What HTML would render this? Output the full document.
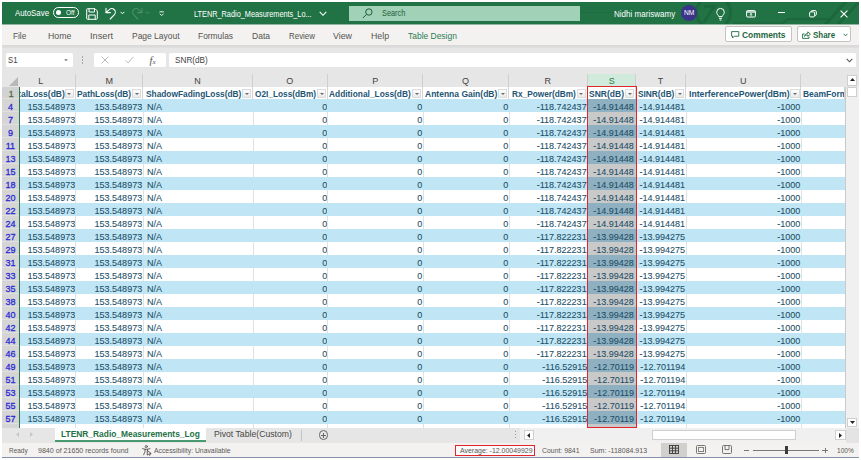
<!DOCTYPE html>
<html lang="en"><head><meta charset="utf-8"><title>LTENR_Radio_Measurements_Log - Excel</title>
<style>
*{box-sizing:border-box;margin:0;padding:0}
html,body{width:861px;height:460px;overflow:hidden;background:#fff}
body{font-family:"Liberation Sans",sans-serif;color:#444;position:relative}
#app{position:absolute;left:0;top:0;width:861px;height:460px}
#app div,#app span,#app i,#app svg{position:absolute}
.t{white-space:nowrap;line-height:1;transform-origin:left center}
/* title bar */
#title{left:2px;top:2px;width:857px;height:22px;background:#217346}
#search{left:348.8px;top:5.8px;width:231.2px;height:15px;background:#a1d1b6}
#avatar{left:681.2px;top:5.3px;width:15.6px;height:15.6px;border-radius:50%;background:#3b3488}
/* ribbon tabs */
#ribbon{left:2px;top:24px;width:857px;height:21px;background:#f3f2f1}
#shadow{left:2px;top:45px;width:857px;height:5px;background:linear-gradient(#d7d7d7,#e6e6e6)}
#tstrip{left:2px;top:24px;width:857px;height:1px;background:#8fb5a0}
.btn{background:#fff;border:1px solid #c6c4c2;border-radius:2px}
/* formula bar */
#fbar{left:2px;top:48px;width:857px;height:24px;background:#e6e6e6}
.wb{background:#fff;border-radius:1.5px}
/* grid */
#grid{left:0;top:0;width:861px;height:460px}
.colhdr{left:2px;top:72px;width:857px;height:14.5px;background:#e6e6e6}
.ch{top:74px;height:12.5px;border-right:1px solid #cfcfcf;}
.ch span{left:0;right:0;top:2.2px;text-align:center;font-size:9.8px;line-height:1;color:#444;transform:scaleX(.92)}
.ch.sel{background:#d0ebdb;border-bottom:1.5px solid #217346}
.ch.sel span{color:#2c7d50}
.rh{left:2px;top:0;width:17px;height:13px;background:#d5d5d5;border-bottom:1px solid #e0e0e0}
.rh span{left:0;right:0.2px;top:3px;text-align:center;font-size:9.7px;line-height:1;color:#2b2bd6;transform:scaleX(.93);-webkit-text-stroke:0.3px #2b2bd6}
.row .rh{left:0}
.rh.r1{background:#d2d2d2}
.rh.r1 span{color:#4f6b3a;right:-1.5px;top:2.4px;font-size:9.4px;-webkit-text-stroke:0.3px #4f6b3a}
.hc{top:86.5px;height:12.5px;background:#fff;border-right:1px solid #d4d4d4;overflow:hidden}
.hx{left:2px;top:2.1px;font-size:9.6px;font-weight:bold;line-height:1;color:#1d5573;white-space:nowrap;transform:scaleX(.885);transform-origin:left center}
.dd{right:0.6px;top:2px;width:9.4px;height:9.8px;background:linear-gradient(#fdfdfd,#e9e9e9);border:1px solid #dcdcdc}
.dd:after{content:"";position:absolute;left:1.9px;top:3.2px;border:2.1px solid transparent;border-top:2.5px solid #6a6a6a;border-bottom:0}
.row{left:2px;width:843.5px;height:13px}
.row.b{background:#c0e6f5}
.row.w{background:#fff}
.c{top:0;height:13px;overflow:hidden;border-right:1px solid transparent}
.row.w .c{border-right-color:#e1e1e1}
.c span{top:2.9px;font-size:9.5px;line-height:1;color:#214e68;white-space:nowrap;-webkit-text-stroke:0.08px #214e68}
.c.r span{right:0.3px;transform:scaleX(.95);transform-origin:right center}
.c.l span{left:3.2px;transform:scaleX(.95);transform-origin:left center}
.c.r.s span{right:1.9px}
.row.b .c.s{background:#8eb0c0}
.row.w .c.s{background:#c9c9c9}
.gline{left:19px;top:86.5px;width:1.1px;height:341.5px;background:#27794b}
.redbox{border:1.8px solid #e3242b}
/* vertical scrollbar */
#vs{left:845px;top:86.5px;width:14px;height:341.5px;background:#f0f0f0;border-left:1px solid #c9c9c9}
#corner{left:846px;top:428px;width:13px;height:15px;background:#e4e4e4}
/* sheet tab bar */
#tabs{left:2px;top:428px;width:857px;height:15px;background:#e6e6e6}
#hs{left:519.5px;top:428px;width:339.5px;height:15px;background:#f0f0f0}
#status{left:2px;top:443px;width:857px;height:14.8px;background:#f3f2f1;border-bottom:1px solid #8391aa}


</style></head>
<body>
<div id="app">
<div id="title"></div>
<svg id="deco" style="left:2px;top:2px" width="857" height="22" viewBox="2 2 857 22" fill="none" stroke="#1c673c" stroke-width="3">
  <circle cx="713.5" cy="12.5" r="17"/><path d="M704 6.5 H714 L703.5 23" stroke-width="2.6"/>
  <path d="M580 12.5 H640" stroke-width="1.2" opacity=".5"/>
  <path d="M733 23.2 H782" stroke-width="1.6" opacity=".7"/><path d="M780 25.5 L788 19.2 H829" stroke-width="2.2"/><path d="M823.6 26.4 L847.4 0.1"/><path d="M836.2 26.4 L860.6 0.1"/>
</svg>
<!-- autosave toggle -->
<div style="left:52.8px;top:7.4px;width:25.8px;height:10.6px;border:1px solid #fff;border-radius:5.3px"></div>
<div style="left:55.9px;top:10.2px;width:5px;height:5px;border-radius:50%;background:#fff"></div>
<!-- save -->
<svg style="left:86px;top:8px" width="12" height="12" viewBox="0 0 12 12" fill="none" stroke="#fff" stroke-width="1">
  <path d="M0.7 1.5 Q0.7 0.7 1.5 0.7 H9 L11.3 3 V10.5 Q11.3 11.3 10.5 11.3 H1.5 Q0.7 11.3 0.7 10.5 Z"/>
  <path d="M3 0.7 V4 H8.5 V0.7"/><path d="M2.8 11.3 V7 H9.2 V11.3"/>
</svg>
<!-- undo -->
<svg style="left:105px;top:7px" width="12" height="13" viewBox="0 0 12 13" fill="none" stroke="#fff" stroke-width="1.1" stroke-linecap="round" stroke-linejoin="round">
  <path d="M1 1.2 V5.6 H5.4"/><path d="M1.2 5.4 L4 2.8 A3.6 3.6 0 0 1 9.4 7.6 L5.2 12"/>
</svg>
<svg style="left:119.5px;top:11.4px" width="5" height="4" viewBox="0 0 5 4" fill="none" stroke="#fff" stroke-width="1"><path d="M0.6 0.8 L2.5 2.8 L4.4 0.8"/></svg>
<!-- redo dim -->
<svg style="left:130.5px;top:7px" width="12" height="13" viewBox="0 0 12 13" fill="none" stroke="#4d9069" stroke-width="1.1" stroke-linecap="round" stroke-linejoin="round">
  <path d="M11 1.2 V5.6 H6.6"/><path d="M10.8 5.4 L8 2.8 A3.6 3.6 0 0 0 2.6 7.6 L6.8 12"/>
</svg>
<svg style="left:144.7px;top:11.4px" width="5" height="4" viewBox="0 0 5 4" fill="none" stroke="#4d9069" stroke-width="1"><path d="M0.6 0.8 L2.5 2.8 L4.4 0.8"/></svg>
<!-- qat -->
<svg style="left:159.2px;top:10.8px" width="5.4" height="5.6" viewBox="0 0 5.4 5.6" fill="none" stroke="#fff" stroke-width="0.9"><path d="M0.5 0.8 H4.9"/><path d="M0.8 2.7 L2.7 4.6 L4.6 2.7"/></svg>
<!-- filename chevron -->
<svg style="left:319.3px;top:10.8px" width="8" height="6" viewBox="0 0 8 6" fill="none" stroke="#fff" stroke-width="1.1"><path d="M0.7 0.9 L4 4.3 L7.3 0.9"/></svg>
<!-- search -->
<div id="search"></div>
<svg style="left:361.5px;top:7.5px" width="11" height="11" viewBox="0 0 11 11" fill="none" stroke="#1f5e3c" stroke-width="1"><circle cx="6.9" cy="4" r="3.2"/><path d="M4.6 6.3 L0.8 10.1"/></svg>
<div id="avatar"></div>
<!-- lightbulb -->
<svg style="left:716px;top:7.5px" width="9" height="13" viewBox="0 0 9 13" fill="none" stroke="#fff" stroke-width="1"><path d="M2.8 8.6 C2.6 7.2 0.7 6.4 0.7 4.2 A3.8 3.8 0 0 1 8.3 4.2 C8.3 6.4 6.4 7.2 6.2 8.6 Z"/><path d="M3 10.3 H6"/><path d="M3.6 12 H5.4"/></svg>
<!-- ribbon display -->
<svg style="left:745.6px;top:9.6px" width="10" height="8" viewBox="0 0 10 8" fill="none" stroke="#fff" stroke-width="1"><rect x="0.6" y="0.6" width="8.8" height="6.4" rx="0.8"/><path d="M0.6 2 H9.4" stroke-width="1.3"/><path d="M5 6.2 V3.6 M3.7 4.7 L5 3.5 L6.3 4.7" stroke-width="0.9"/></svg>
<!-- minimize -->
<div style="left:778.2px;top:12.4px;width:7.2px;height:1.1px;background:#fff"></div>
<!-- restore -->
<svg style="left:808.5px;top:9.6px" width="8" height="8" viewBox="0 0 8 8" fill="none" stroke="#fff" stroke-width="1"><rect x="0.6" y="1.9" width="5" height="5" rx="1.1"/><path d="M2.2 1.9 V1.5 Q2.2 0.6 3.1 0.6 H6.2 Q7.3 0.6 7.3 1.7 V4.3 Q7.3 5.4 6.2 5.4 H5.7"/></svg>
<!-- close -->
<svg style="left:839.5px;top:9.5px" width="8" height="8" viewBox="0 0 8 8" fill="none" stroke="#fff" stroke-width="1.1"><path d="M0.6 0.6 L7.4 7.4 M7.4 0.6 L0.6 7.4"/></svg>

<div id="ribbon"></div><div id="tstrip"></div>
<div class="btn" style="left:725.2px;top:26.4px;width:66.4px;height:15.8px"></div>
<div class="btn" style="left:797px;top:26.4px;width:53.6px;height:15.8px"></div>
<svg style="left:730.5px;top:30.6px" width="9" height="8" viewBox="0 0 9 8" fill="none" stroke="#1e6b41" stroke-width="0.9" stroke-linejoin="round"><path d="M0.6 0.6 H7.8 V5.2 H3.4 L1.6 7 V5.2 H0.6 Z"/></svg>
<svg style="left:801.5px;top:31px" width="9" height="8" viewBox="0 0 9 8" fill="none" stroke="#1e6b41" stroke-width="0.9" stroke-linejoin="round"><path d="M2.6 3 H0.6 V7.4 H7 V5.6"/><path d="M2.6 5.4 C2.8 3.4 4 2.4 5.8 2.4 V0.8 L8.4 3.2 L5.8 5.4 V4 C4.4 4 3.4 4.4 2.6 5.4 Z"/></svg>
<svg style="left:842.8px;top:33.4px" width="5" height="4" viewBox="0 0 5 4" fill="none" stroke="#1e6b41" stroke-width="0.9"><path d="M0.6 0.8 L2.5 2.8 L4.4 0.8"/></svg>
<div id="shadow"></div>

<div id="fbar"></div>
<div class="wb" style="left:5.5px;top:52.6px;width:67px;height:14.6px"></div>
<svg style="left:63.9px;top:58.6px" width="4" height="2.6" viewBox="0 0 4 2.6"><path d="M0.2 0.2 H3.8 L2 2.4 Z" fill="#7a7a7a"/></svg>
<div style="left:82px;top:56.4px;width:1.2px;height:1.2px;background:#a6a6a6;box-shadow:0 3px 0 #a6a6a6,0 6px 0 #a6a6a6"></div>
<div class="wb" style="left:93.7px;top:52.6px;width:72px;height:14.6px"></div>
<svg style="left:101.4px;top:55.6px" width="8" height="8" viewBox="0 0 8 8" fill="none" stroke="#bdbdbd" stroke-width="1"><path d="M0.6 0.6 L7.4 7.4 M7.4 0.6 L0.6 7.4"/></svg>
<svg style="left:125.3px;top:55.8px" width="9" height="8" viewBox="0 0 9 8" fill="none" stroke="#bdbdbd" stroke-width="1"><path d="M0.6 4.4 L3.2 7 L8.4 0.8"/></svg>
<span class="t" style="left:149.6px;top:55px;font:italic 10.5px 'Liberation Serif',serif;color:#555">f<span style="position:static;font-size:7px">x</span></span>
<div class="wb" style="left:168.7px;top:52.6px;width:687.2px;height:14.6px"></div>
<svg style="left:846.2px;top:57.8px" width="7" height="5" viewBox="0 0 7 5" fill="none" stroke="#555" stroke-width="1.1"><path d="M0.7 0.8 L3.5 3.8 L6.3 0.8"/></svg>

<div id="grid">
<div class="colhdr"></div>
<svg style="left:8.5px;top:76.5px" width="9" height="9" viewBox="0 0 9 9"><path d="M9 0 V9 H0 Z" fill="#b8b8b8"/></svg>
<div class="ch" style="left:20px;width:55.5px;overflow:hidden"><span style="left:-13px">L</span></div>
<div class="ch" style="left:75.5px;width:67.5px"><span>M</span></div>
<div class="ch" style="left:143px;width:110px"><span>N</span></div>
<div class="ch" style="left:253px;width:74.6px"><span>O</span></div>
<div class="ch" style="left:327.6px;width:95.4px"><span>P</span></div>
<div class="ch" style="left:423px;width:86px"><span>Q</span></div>
<div class="ch" style="left:509px;width:78.5px"><span>R</span></div>
<div class="ch sel" style="left:587.5px;width:48.5px"><span>S</span></div>
<div class="ch" style="left:636px;width:50px"><span>T</span></div>
<div class="ch" style="left:686px;width:115.3px"><span>U</span></div>
<div class="ch" style="left:801.3px;width:44.2px;border-right:0"><span></span></div>
<div class="rh r1" style="top:86.5px;height:12.5px"><span>1</span></div>
<div class="hc" style="left:20px;width:55.5px"><span class="hx" id="h0" style="left:auto;right:9.9px;transform-origin:right center">TotalLoss(dB)</span><i class="dd"></i></div>
<div class="hc" style="left:75.5px;width:67.5px"><span class="hx" id="h1" style="left:1.9px;transform:scaleX(0.868)">PathLoss(dB)</span><i class="dd"></i></div>
<div class="hc" style="left:143px;width:110px"><span class="hx" id="h2" style="left:2.6px;transform:scaleX(0.868)">ShadowFadingLoss(dB)</span><i class="dd"></i></div>
<div class="hc" style="left:253px;width:74.6px"><span class="hx" id="h3" style="left:1.8px;transform:scaleX(0.862)">O2I_Loss(dBm)</span><i class="dd"></i></div>
<div class="hc" style="left:327.6px;width:95.4px"><span class="hx" id="h4" style="left:1.8px;transform:scaleX(0.872)">Additional_Loss(dB)</span><i class="dd"></i></div>
<div class="hc" style="left:423px;width:86px"><span class="hx" id="h5" style="left:2.1px;transform:scaleX(0.887)">Antenna Gain(dB)</span><i class="dd"></i></div>
<div class="hc" style="left:509px;width:78.5px"><span class="hx" id="h6" style="left:2.5px;transform:scaleX(0.861)">Rx_Power(dBm)</span><i class="dd"></i></div>
<div class="hc" style="left:587.5px;width:48.5px"><span class="hx" id="h7" style="left:1.9px;transform:scaleX(0.887)">SNR(dB)</span><i class="dd"></i></div>
<div class="hc" style="left:636px;width:50px"><span class="hx" id="h8" style="left:2.2px;transform:scaleX(0.864)">SINR(dB)</span><i class="dd"></i></div>
<div class="hc" style="left:686px;width:115.3px"><span class="hx" id="h9" style="left:2.6px;transform:scaleX(0.904)">InterferencePower(dBm)</span><i class="dd"></i></div>
<div class="hc" style="left:801.3px;width:44.2px"><span class="hx" id="h10" style="left:2.0px;transform:scaleX(0.882)">BeamForm</span></div>
<div class="row b" style="top:99.2px">
<div class="rh"><span>4</span></div>
<div class="c r" style="left:18.8px;width:55.5px"><span>153.548973</span></div>
<div class="c r" style="left:74.3px;width:67.5px"><span>153.548973</span></div>
<div class="c l" style="left:141.8px;width:110px"><span>N/A</span></div>
<div class="c r" style="left:251.8px;width:74.6px"><span>0</span></div>
<div class="c r" style="left:326.4px;width:95.4px"><span>0</span></div>
<div class="c r" style="left:421.8px;width:86px"><span>0</span></div>
<div class="c r" style="left:507.8px;width:78.5px"><span>-118.742437</span></div>
<div class="c r s" style="left:586.3px;width:48.5px"><span>-14.91448</span></div>
<div class="c r" style="left:634.8px;width:50px"><span>-14.914481</span></div>
<div class="c r" style="left:684.8px;width:115.3px"><span>-1000</span></div>
<div class="c l" style="left:800.1px;width:44.2px"><span></span></div>
</div>
<div class="row w" style="top:112.19px">
<div class="rh"><span>7</span></div>
<div class="c r" style="left:18.8px;width:55.5px"><span>153.548973</span></div>
<div class="c r" style="left:74.3px;width:67.5px"><span>153.548973</span></div>
<div class="c l" style="left:141.8px;width:110px"><span>N/A</span></div>
<div class="c r" style="left:251.8px;width:74.6px"><span>0</span></div>
<div class="c r" style="left:326.4px;width:95.4px"><span>0</span></div>
<div class="c r" style="left:421.8px;width:86px"><span>0</span></div>
<div class="c r" style="left:507.8px;width:78.5px"><span>-118.742437</span></div>
<div class="c r s" style="left:586.3px;width:48.5px"><span>-14.91448</span></div>
<div class="c r" style="left:634.8px;width:50px"><span>-14.914481</span></div>
<div class="c r" style="left:684.8px;width:115.3px"><span>-1000</span></div>
<div class="c l" style="left:800.1px;width:44.2px"><span></span></div>
</div>
<div class="row b" style="top:125.18px">
<div class="rh"><span>9</span></div>
<div class="c r" style="left:18.8px;width:55.5px"><span>153.548973</span></div>
<div class="c r" style="left:74.3px;width:67.5px"><span>153.548973</span></div>
<div class="c l" style="left:141.8px;width:110px"><span>N/A</span></div>
<div class="c r" style="left:251.8px;width:74.6px"><span>0</span></div>
<div class="c r" style="left:326.4px;width:95.4px"><span>0</span></div>
<div class="c r" style="left:421.8px;width:86px"><span>0</span></div>
<div class="c r" style="left:507.8px;width:78.5px"><span>-118.742437</span></div>
<div class="c r s" style="left:586.3px;width:48.5px"><span>-14.91448</span></div>
<div class="c r" style="left:634.8px;width:50px"><span>-14.914481</span></div>
<div class="c r" style="left:684.8px;width:115.3px"><span>-1000</span></div>
<div class="c l" style="left:800.1px;width:44.2px"><span></span></div>
</div>
<div class="row w" style="top:138.17px">
<div class="rh"><span>11</span></div>
<div class="c r" style="left:18.8px;width:55.5px"><span>153.548973</span></div>
<div class="c r" style="left:74.3px;width:67.5px"><span>153.548973</span></div>
<div class="c l" style="left:141.8px;width:110px"><span>N/A</span></div>
<div class="c r" style="left:251.8px;width:74.6px"><span>0</span></div>
<div class="c r" style="left:326.4px;width:95.4px"><span>0</span></div>
<div class="c r" style="left:421.8px;width:86px"><span>0</span></div>
<div class="c r" style="left:507.8px;width:78.5px"><span>-118.742437</span></div>
<div class="c r s" style="left:586.3px;width:48.5px"><span>-14.91448</span></div>
<div class="c r" style="left:634.8px;width:50px"><span>-14.914481</span></div>
<div class="c r" style="left:684.8px;width:115.3px"><span>-1000</span></div>
<div class="c l" style="left:800.1px;width:44.2px"><span></span></div>
</div>
<div class="row b" style="top:151.16px">
<div class="rh"><span>13</span></div>
<div class="c r" style="left:18.8px;width:55.5px"><span>153.548973</span></div>
<div class="c r" style="left:74.3px;width:67.5px"><span>153.548973</span></div>
<div class="c l" style="left:141.8px;width:110px"><span>N/A</span></div>
<div class="c r" style="left:251.8px;width:74.6px"><span>0</span></div>
<div class="c r" style="left:326.4px;width:95.4px"><span>0</span></div>
<div class="c r" style="left:421.8px;width:86px"><span>0</span></div>
<div class="c r" style="left:507.8px;width:78.5px"><span>-118.742437</span></div>
<div class="c r s" style="left:586.3px;width:48.5px"><span>-14.91448</span></div>
<div class="c r" style="left:634.8px;width:50px"><span>-14.914481</span></div>
<div class="c r" style="left:684.8px;width:115.3px"><span>-1000</span></div>
<div class="c l" style="left:800.1px;width:44.2px"><span></span></div>
</div>
<div class="row w" style="top:164.15px">
<div class="rh"><span>15</span></div>
<div class="c r" style="left:18.8px;width:55.5px"><span>153.548973</span></div>
<div class="c r" style="left:74.3px;width:67.5px"><span>153.548973</span></div>
<div class="c l" style="left:141.8px;width:110px"><span>N/A</span></div>
<div class="c r" style="left:251.8px;width:74.6px"><span>0</span></div>
<div class="c r" style="left:326.4px;width:95.4px"><span>0</span></div>
<div class="c r" style="left:421.8px;width:86px"><span>0</span></div>
<div class="c r" style="left:507.8px;width:78.5px"><span>-118.742437</span></div>
<div class="c r s" style="left:586.3px;width:48.5px"><span>-14.91448</span></div>
<div class="c r" style="left:634.8px;width:50px"><span>-14.914481</span></div>
<div class="c r" style="left:684.8px;width:115.3px"><span>-1000</span></div>
<div class="c l" style="left:800.1px;width:44.2px"><span></span></div>
</div>
<div class="row b" style="top:177.14px">
<div class="rh"><span>18</span></div>
<div class="c r" style="left:18.8px;width:55.5px"><span>153.548973</span></div>
<div class="c r" style="left:74.3px;width:67.5px"><span>153.548973</span></div>
<div class="c l" style="left:141.8px;width:110px"><span>N/A</span></div>
<div class="c r" style="left:251.8px;width:74.6px"><span>0</span></div>
<div class="c r" style="left:326.4px;width:95.4px"><span>0</span></div>
<div class="c r" style="left:421.8px;width:86px"><span>0</span></div>
<div class="c r" style="left:507.8px;width:78.5px"><span>-118.742437</span></div>
<div class="c r s" style="left:586.3px;width:48.5px"><span>-14.91448</span></div>
<div class="c r" style="left:634.8px;width:50px"><span>-14.914481</span></div>
<div class="c r" style="left:684.8px;width:115.3px"><span>-1000</span></div>
<div class="c l" style="left:800.1px;width:44.2px"><span></span></div>
</div>
<div class="row w" style="top:190.13px">
<div class="rh"><span>20</span></div>
<div class="c r" style="left:18.8px;width:55.5px"><span>153.548973</span></div>
<div class="c r" style="left:74.3px;width:67.5px"><span>153.548973</span></div>
<div class="c l" style="left:141.8px;width:110px"><span>N/A</span></div>
<div class="c r" style="left:251.8px;width:74.6px"><span>0</span></div>
<div class="c r" style="left:326.4px;width:95.4px"><span>0</span></div>
<div class="c r" style="left:421.8px;width:86px"><span>0</span></div>
<div class="c r" style="left:507.8px;width:78.5px"><span>-118.742437</span></div>
<div class="c r s" style="left:586.3px;width:48.5px"><span>-14.91448</span></div>
<div class="c r" style="left:634.8px;width:50px"><span>-14.914481</span></div>
<div class="c r" style="left:684.8px;width:115.3px"><span>-1000</span></div>
<div class="c l" style="left:800.1px;width:44.2px"><span></span></div>
</div>
<div class="row b" style="top:203.12px">
<div class="rh"><span>22</span></div>
<div class="c r" style="left:18.8px;width:55.5px"><span>153.548973</span></div>
<div class="c r" style="left:74.3px;width:67.5px"><span>153.548973</span></div>
<div class="c l" style="left:141.8px;width:110px"><span>N/A</span></div>
<div class="c r" style="left:251.8px;width:74.6px"><span>0</span></div>
<div class="c r" style="left:326.4px;width:95.4px"><span>0</span></div>
<div class="c r" style="left:421.8px;width:86px"><span>0</span></div>
<div class="c r" style="left:507.8px;width:78.5px"><span>-118.742437</span></div>
<div class="c r s" style="left:586.3px;width:48.5px"><span>-14.91448</span></div>
<div class="c r" style="left:634.8px;width:50px"><span>-14.914481</span></div>
<div class="c r" style="left:684.8px;width:115.3px"><span>-1000</span></div>
<div class="c l" style="left:800.1px;width:44.2px"><span></span></div>
</div>
<div class="row w" style="top:216.11px">
<div class="rh"><span>24</span></div>
<div class="c r" style="left:18.8px;width:55.5px"><span>153.548973</span></div>
<div class="c r" style="left:74.3px;width:67.5px"><span>153.548973</span></div>
<div class="c l" style="left:141.8px;width:110px"><span>N/A</span></div>
<div class="c r" style="left:251.8px;width:74.6px"><span>0</span></div>
<div class="c r" style="left:326.4px;width:95.4px"><span>0</span></div>
<div class="c r" style="left:421.8px;width:86px"><span>0</span></div>
<div class="c r" style="left:507.8px;width:78.5px"><span>-118.742437</span></div>
<div class="c r s" style="left:586.3px;width:48.5px"><span>-14.91448</span></div>
<div class="c r" style="left:634.8px;width:50px"><span>-14.914481</span></div>
<div class="c r" style="left:684.8px;width:115.3px"><span>-1000</span></div>
<div class="c l" style="left:800.1px;width:44.2px"><span></span></div>
</div>
<div class="row b" style="top:229.1px">
<div class="rh"><span>27</span></div>
<div class="c r" style="left:18.8px;width:55.5px"><span>153.548973</span></div>
<div class="c r" style="left:74.3px;width:67.5px"><span>153.548973</span></div>
<div class="c l" style="left:141.8px;width:110px"><span>N/A</span></div>
<div class="c r" style="left:251.8px;width:74.6px"><span>0</span></div>
<div class="c r" style="left:326.4px;width:95.4px"><span>0</span></div>
<div class="c r" style="left:421.8px;width:86px"><span>0</span></div>
<div class="c r" style="left:507.8px;width:78.5px"><span>-117.822231</span></div>
<div class="c r s" style="left:586.3px;width:48.5px"><span>-13.99428</span></div>
<div class="c r" style="left:634.8px;width:50px"><span>-13.994275</span></div>
<div class="c r" style="left:684.8px;width:115.3px"><span>-1000</span></div>
<div class="c l" style="left:800.1px;width:44.2px"><span></span></div>
</div>
<div class="row w" style="top:242.09px">
<div class="rh"><span>29</span></div>
<div class="c r" style="left:18.8px;width:55.5px"><span>153.548973</span></div>
<div class="c r" style="left:74.3px;width:67.5px"><span>153.548973</span></div>
<div class="c l" style="left:141.8px;width:110px"><span>N/A</span></div>
<div class="c r" style="left:251.8px;width:74.6px"><span>0</span></div>
<div class="c r" style="left:326.4px;width:95.4px"><span>0</span></div>
<div class="c r" style="left:421.8px;width:86px"><span>0</span></div>
<div class="c r" style="left:507.8px;width:78.5px"><span>-117.822231</span></div>
<div class="c r s" style="left:586.3px;width:48.5px"><span>-13.99428</span></div>
<div class="c r" style="left:634.8px;width:50px"><span>-13.994275</span></div>
<div class="c r" style="left:684.8px;width:115.3px"><span>-1000</span></div>
<div class="c l" style="left:800.1px;width:44.2px"><span></span></div>
</div>
<div class="row b" style="top:255.08px">
<div class="rh"><span>31</span></div>
<div class="c r" style="left:18.8px;width:55.5px"><span>153.548973</span></div>
<div class="c r" style="left:74.3px;width:67.5px"><span>153.548973</span></div>
<div class="c l" style="left:141.8px;width:110px"><span>N/A</span></div>
<div class="c r" style="left:251.8px;width:74.6px"><span>0</span></div>
<div class="c r" style="left:326.4px;width:95.4px"><span>0</span></div>
<div class="c r" style="left:421.8px;width:86px"><span>0</span></div>
<div class="c r" style="left:507.8px;width:78.5px"><span>-117.822231</span></div>
<div class="c r s" style="left:586.3px;width:48.5px"><span>-13.99428</span></div>
<div class="c r" style="left:634.8px;width:50px"><span>-13.994275</span></div>
<div class="c r" style="left:684.8px;width:115.3px"><span>-1000</span></div>
<div class="c l" style="left:800.1px;width:44.2px"><span></span></div>
</div>
<div class="row w" style="top:268.07px">
<div class="rh"><span>33</span></div>
<div class="c r" style="left:18.8px;width:55.5px"><span>153.548973</span></div>
<div class="c r" style="left:74.3px;width:67.5px"><span>153.548973</span></div>
<div class="c l" style="left:141.8px;width:110px"><span>N/A</span></div>
<div class="c r" style="left:251.8px;width:74.6px"><span>0</span></div>
<div class="c r" style="left:326.4px;width:95.4px"><span>0</span></div>
<div class="c r" style="left:421.8px;width:86px"><span>0</span></div>
<div class="c r" style="left:507.8px;width:78.5px"><span>-117.822231</span></div>
<div class="c r s" style="left:586.3px;width:48.5px"><span>-13.99428</span></div>
<div class="c r" style="left:634.8px;width:50px"><span>-13.994275</span></div>
<div class="c r" style="left:684.8px;width:115.3px"><span>-1000</span></div>
<div class="c l" style="left:800.1px;width:44.2px"><span></span></div>
</div>
<div class="row b" style="top:281.06px">
<div class="rh"><span>35</span></div>
<div class="c r" style="left:18.8px;width:55.5px"><span>153.548973</span></div>
<div class="c r" style="left:74.3px;width:67.5px"><span>153.548973</span></div>
<div class="c l" style="left:141.8px;width:110px"><span>N/A</span></div>
<div class="c r" style="left:251.8px;width:74.6px"><span>0</span></div>
<div class="c r" style="left:326.4px;width:95.4px"><span>0</span></div>
<div class="c r" style="left:421.8px;width:86px"><span>0</span></div>
<div class="c r" style="left:507.8px;width:78.5px"><span>-117.822231</span></div>
<div class="c r s" style="left:586.3px;width:48.5px"><span>-13.99428</span></div>
<div class="c r" style="left:634.8px;width:50px"><span>-13.994275</span></div>
<div class="c r" style="left:684.8px;width:115.3px"><span>-1000</span></div>
<div class="c l" style="left:800.1px;width:44.2px"><span></span></div>
</div>
<div class="row w" style="top:294.05px">
<div class="rh"><span>38</span></div>
<div class="c r" style="left:18.8px;width:55.5px"><span>153.548973</span></div>
<div class="c r" style="left:74.3px;width:67.5px"><span>153.548973</span></div>
<div class="c l" style="left:141.8px;width:110px"><span>N/A</span></div>
<div class="c r" style="left:251.8px;width:74.6px"><span>0</span></div>
<div class="c r" style="left:326.4px;width:95.4px"><span>0</span></div>
<div class="c r" style="left:421.8px;width:86px"><span>0</span></div>
<div class="c r" style="left:507.8px;width:78.5px"><span>-117.822231</span></div>
<div class="c r s" style="left:586.3px;width:48.5px"><span>-13.99428</span></div>
<div class="c r" style="left:634.8px;width:50px"><span>-13.994275</span></div>
<div class="c r" style="left:684.8px;width:115.3px"><span>-1000</span></div>
<div class="c l" style="left:800.1px;width:44.2px"><span></span></div>
</div>
<div class="row b" style="top:307.04px">
<div class="rh"><span>40</span></div>
<div class="c r" style="left:18.8px;width:55.5px"><span>153.548973</span></div>
<div class="c r" style="left:74.3px;width:67.5px"><span>153.548973</span></div>
<div class="c l" style="left:141.8px;width:110px"><span>N/A</span></div>
<div class="c r" style="left:251.8px;width:74.6px"><span>0</span></div>
<div class="c r" style="left:326.4px;width:95.4px"><span>0</span></div>
<div class="c r" style="left:421.8px;width:86px"><span>0</span></div>
<div class="c r" style="left:507.8px;width:78.5px"><span>-117.822231</span></div>
<div class="c r s" style="left:586.3px;width:48.5px"><span>-13.99428</span></div>
<div class="c r" style="left:634.8px;width:50px"><span>-13.994275</span></div>
<div class="c r" style="left:684.8px;width:115.3px"><span>-1000</span></div>
<div class="c l" style="left:800.1px;width:44.2px"><span></span></div>
</div>
<div class="row w" style="top:320.03px">
<div class="rh"><span>42</span></div>
<div class="c r" style="left:18.8px;width:55.5px"><span>153.548973</span></div>
<div class="c r" style="left:74.3px;width:67.5px"><span>153.548973</span></div>
<div class="c l" style="left:141.8px;width:110px"><span>N/A</span></div>
<div class="c r" style="left:251.8px;width:74.6px"><span>0</span></div>
<div class="c r" style="left:326.4px;width:95.4px"><span>0</span></div>
<div class="c r" style="left:421.8px;width:86px"><span>0</span></div>
<div class="c r" style="left:507.8px;width:78.5px"><span>-117.822231</span></div>
<div class="c r s" style="left:586.3px;width:48.5px"><span>-13.99428</span></div>
<div class="c r" style="left:634.8px;width:50px"><span>-13.994275</span></div>
<div class="c r" style="left:684.8px;width:115.3px"><span>-1000</span></div>
<div class="c l" style="left:800.1px;width:44.2px"><span></span></div>
</div>
<div class="row b" style="top:333.02px">
<div class="rh"><span>44</span></div>
<div class="c r" style="left:18.8px;width:55.5px"><span>153.548973</span></div>
<div class="c r" style="left:74.3px;width:67.5px"><span>153.548973</span></div>
<div class="c l" style="left:141.8px;width:110px"><span>N/A</span></div>
<div class="c r" style="left:251.8px;width:74.6px"><span>0</span></div>
<div class="c r" style="left:326.4px;width:95.4px"><span>0</span></div>
<div class="c r" style="left:421.8px;width:86px"><span>0</span></div>
<div class="c r" style="left:507.8px;width:78.5px"><span>-117.822231</span></div>
<div class="c r s" style="left:586.3px;width:48.5px"><span>-13.99428</span></div>
<div class="c r" style="left:634.8px;width:50px"><span>-13.994275</span></div>
<div class="c r" style="left:684.8px;width:115.3px"><span>-1000</span></div>
<div class="c l" style="left:800.1px;width:44.2px"><span></span></div>
</div>
<div class="row w" style="top:346.01px">
<div class="rh"><span>46</span></div>
<div class="c r" style="left:18.8px;width:55.5px"><span>153.548973</span></div>
<div class="c r" style="left:74.3px;width:67.5px"><span>153.548973</span></div>
<div class="c l" style="left:141.8px;width:110px"><span>N/A</span></div>
<div class="c r" style="left:251.8px;width:74.6px"><span>0</span></div>
<div class="c r" style="left:326.4px;width:95.4px"><span>0</span></div>
<div class="c r" style="left:421.8px;width:86px"><span>0</span></div>
<div class="c r" style="left:507.8px;width:78.5px"><span>-117.822231</span></div>
<div class="c r s" style="left:586.3px;width:48.5px"><span>-13.99428</span></div>
<div class="c r" style="left:634.8px;width:50px"><span>-13.994275</span></div>
<div class="c r" style="left:684.8px;width:115.3px"><span>-1000</span></div>
<div class="c l" style="left:800.1px;width:44.2px"><span></span></div>
</div>
<div class="row b" style="top:359.0px">
<div class="rh"><span>49</span></div>
<div class="c r" style="left:18.8px;width:55.5px"><span>153.548973</span></div>
<div class="c r" style="left:74.3px;width:67.5px"><span>153.548973</span></div>
<div class="c l" style="left:141.8px;width:110px"><span>N/A</span></div>
<div class="c r" style="left:251.8px;width:74.6px"><span>0</span></div>
<div class="c r" style="left:326.4px;width:95.4px"><span>0</span></div>
<div class="c r" style="left:421.8px;width:86px"><span>0</span></div>
<div class="c r" style="left:507.8px;width:78.5px"><span>-116.52915</span></div>
<div class="c r s" style="left:586.3px;width:48.5px"><span>-12.70119</span></div>
<div class="c r" style="left:634.8px;width:50px"><span>-12.701194</span></div>
<div class="c r" style="left:684.8px;width:115.3px"><span>-1000</span></div>
<div class="c l" style="left:800.1px;width:44.2px"><span></span></div>
</div>
<div class="row w" style="top:371.99px">
<div class="rh"><span>51</span></div>
<div class="c r" style="left:18.8px;width:55.5px"><span>153.548973</span></div>
<div class="c r" style="left:74.3px;width:67.5px"><span>153.548973</span></div>
<div class="c l" style="left:141.8px;width:110px"><span>N/A</span></div>
<div class="c r" style="left:251.8px;width:74.6px"><span>0</span></div>
<div class="c r" style="left:326.4px;width:95.4px"><span>0</span></div>
<div class="c r" style="left:421.8px;width:86px"><span>0</span></div>
<div class="c r" style="left:507.8px;width:78.5px"><span>-116.52915</span></div>
<div class="c r s" style="left:586.3px;width:48.5px"><span>-12.70119</span></div>
<div class="c r" style="left:634.8px;width:50px"><span>-12.701194</span></div>
<div class="c r" style="left:684.8px;width:115.3px"><span>-1000</span></div>
<div class="c l" style="left:800.1px;width:44.2px"><span></span></div>
</div>
<div class="row b" style="top:384.98px">
<div class="rh"><span>53</span></div>
<div class="c r" style="left:18.8px;width:55.5px"><span>153.548973</span></div>
<div class="c r" style="left:74.3px;width:67.5px"><span>153.548973</span></div>
<div class="c l" style="left:141.8px;width:110px"><span>N/A</span></div>
<div class="c r" style="left:251.8px;width:74.6px"><span>0</span></div>
<div class="c r" style="left:326.4px;width:95.4px"><span>0</span></div>
<div class="c r" style="left:421.8px;width:86px"><span>0</span></div>
<div class="c r" style="left:507.8px;width:78.5px"><span>-116.52915</span></div>
<div class="c r s" style="left:586.3px;width:48.5px"><span>-12.70119</span></div>
<div class="c r" style="left:634.8px;width:50px"><span>-12.701194</span></div>
<div class="c r" style="left:684.8px;width:115.3px"><span>-1000</span></div>
<div class="c l" style="left:800.1px;width:44.2px"><span></span></div>
</div>
<div class="row w" style="top:397.97px">
<div class="rh"><span>55</span></div>
<div class="c r" style="left:18.8px;width:55.5px"><span>153.548973</span></div>
<div class="c r" style="left:74.3px;width:67.5px"><span>153.548973</span></div>
<div class="c l" style="left:141.8px;width:110px"><span>N/A</span></div>
<div class="c r" style="left:251.8px;width:74.6px"><span>0</span></div>
<div class="c r" style="left:326.4px;width:95.4px"><span>0</span></div>
<div class="c r" style="left:421.8px;width:86px"><span>0</span></div>
<div class="c r" style="left:507.8px;width:78.5px"><span>-116.52915</span></div>
<div class="c r s" style="left:586.3px;width:48.5px"><span>-12.70119</span></div>
<div class="c r" style="left:634.8px;width:50px"><span>-12.701194</span></div>
<div class="c r" style="left:684.8px;width:115.3px"><span>-1000</span></div>
<div class="c l" style="left:800.1px;width:44.2px"><span></span></div>
</div>
<div class="row b" style="top:410.96px">
<div class="rh"><span>57</span></div>
<div class="c r" style="left:18.8px;width:55.5px"><span>153.548973</span></div>
<div class="c r" style="left:74.3px;width:67.5px"><span>153.548973</span></div>
<div class="c l" style="left:141.8px;width:110px"><span>N/A</span></div>
<div class="c r" style="left:251.8px;width:74.6px"><span>0</span></div>
<div class="c r" style="left:326.4px;width:95.4px"><span>0</span></div>
<div class="c r" style="left:421.8px;width:86px"><span>0</span></div>
<div class="c r" style="left:507.8px;width:78.5px"><span>-116.52915</span></div>
<div class="c r s" style="left:586.3px;width:48.5px"><span>-12.70119</span></div>
<div class="c r" style="left:634.8px;width:50px"><span>-12.701194</span></div>
<div class="c r" style="left:684.8px;width:115.3px"><span>-1000</span></div>
<div class="c l" style="left:800.1px;width:44.2px"><span></span></div>
</div>
<div class="row w" style="top:424px;height:4px"><div class="rh" style="height:4px;border:0"></div>
<div class="c" style="left:18.8px;width:55.5px;height:4px"></div>
<div class="c" style="left:74.3px;width:67.5px;height:4px"></div>
<div class="c" style="left:141.8px;width:110px;height:4px"></div>
<div class="c" style="left:251.8px;width:74.6px;height:4px"></div>
<div class="c" style="left:326.4px;width:95.4px;height:4px"></div>
<div class="c" style="left:421.8px;width:86px;height:4px"></div>
<div class="c" style="left:507.8px;width:78.5px;height:4px"></div>
<div class="c s" style="left:586.3px;width:48.5px;height:4px"></div>
<div class="c" style="left:634.8px;width:50px;height:4px"></div>
<div class="c" style="left:684.8px;width:115.3px;height:4px"></div>
<div class="c" style="left:800.1px;width:44.2px;height:4px"></div>
</div>
<div class="gline"></div>
<div class="redbox" style="left:587px;top:85.6px;width:49.6px;height:342px"></div>
</div>
<div id="vs"></div>
<div style="left:846.8px;top:74.8px;width:10.4px;height:10.8px;background:#fff;border:1px solid #cfcfcf"></div>
<svg style="left:849.5px;top:78.4px" width="5" height="3" viewBox="0 0 5 3"><path d="M0 3 H5 L2.5 0 Z" fill="#222"/></svg>
<div style="left:846.8px;top:86.8px;width:10.4px;height:9.8px;background:#fff;border:1px solid #cfcfcf"></div>
<div style="left:846.8px;top:417.6px;width:10.4px;height:9.8px;background:#fff;border:1px solid #cfcfcf"></div>
<svg style="left:849.5px;top:421px" width="5" height="3" viewBox="0 0 5 3"><path d="M0 0 H5 L2.5 3 Z" fill="#222"/></svg>

<div id="tabs"></div><div id="hs"></div><div id="corner"></div>
<svg style="left:15.5px;top:432.2px" width="3" height="5" viewBox="0 0 3 5"><path d="M3 0 V5 L0 2.5 Z" fill="#c6c6c6"/></svg>
<svg style="left:30px;top:432.2px" width="3" height="5" viewBox="0 0 3 5"><path d="M0 0 V5 L3 2.5 Z" fill="#c6c6c6"/></svg>
<div style="left:54.5px;top:428.5px;width:1px;height:13px;background:#cfcfcf"></div>
<div style="left:55px;top:428px;width:150.5px;height:13.5px;background:#fff"></div>
<div style="left:55px;top:440.2px;width:150.5px;height:2px;background:#4a9a70"></div>
<div style="left:301.4px;top:430px;width:1px;height:11px;background:#c4c4c4"></div>
<div style="left:318.7px;top:430.2px;width:9.6px;height:9.6px;border:1px solid #666;border-radius:50%"></div>
<div style="left:321px;top:434.6px;width:5px;height:0.9px;background:#666"></div>
<div style="left:323.05px;top:432.5px;width:0.9px;height:5px;background:#666"></div>
<div style="left:514.5px;top:431px;width:1.2px;height:1.2px;background:#a0a0a0;box-shadow:0 3px 0 #a0a0a0,0 6px 0 #a0a0a0"></div>
<div style="left:523.8px;top:430.4px;width:10.6px;height:9.6px;background:#fff;border:1px solid #cfcfcf"></div>
<svg style="left:527.3px;top:432.7px" width="3" height="5" viewBox="0 0 3 5"><path d="M3 0 V5 L0 2.5 Z" fill="#222"/></svg>
<div style="left:652.4px;top:429.8px;width:143.2px;height:10.6px;background:#fff;border:1px solid #cfcfcf"></div>
<div style="left:835.2px;top:430.4px;width:10.6px;height:9.6px;background:#fff;border:1px solid #cfcfcf"></div>
<svg style="left:839.3px;top:432.7px" width="3" height="5" viewBox="0 0 3 5"><path d="M0 0 V5 L3 2.5 Z" fill="#222"/></svg>

<div id="status"></div>
<!-- accessibility icon -->
<svg style="left:141.6px;top:445.2px" width="10" height="10.4" viewBox="0 0 10 10.4" fill="none" stroke="#504e4c" stroke-width="0.85" stroke-linejoin="round" stroke-linecap="round"><circle cx="4.3" cy="1.6" r="1.1"/><path d="M0.6 3.6 L3 4.3 H5.6 L8 3.6 M3 4.3 V6.8 L1.6 9.8 M5.6 4.3 V6"/><path d="M5.6 5.9 L9.2 8.4 L7.5 8.7 L8.3 10 L7.5 10.3 L6.8 9 L5.6 9.9 Z" fill="#f3f2f1"/></svg>
<div class="redbox" style="left:454.8px;top:444.6px;width:80.6px;height:11.8px;border-width:1.7px;background:#fbfbfb"></div>
<div style="left:660.5px;top:443px;width:26.5px;height:14px;background:#d2d0ce"></div>
<svg style="left:668.6px;top:445.3px" width="10" height="9" viewBox="0 0 10 9" fill="none" stroke="#3b3a39" stroke-width="0.9"><rect x="0.5" y="0.5" width="9" height="8"/><path d="M3.5 0.5 V8.5 M6.5 0.5 V8.5 M0.5 3.2 H9.5 M0.5 5.8 H9.5"/></svg>
<svg style="left:695.8px;top:445.3px" width="10" height="9" viewBox="0 0 10 9" fill="none" stroke="#6a6866" stroke-width="0.9"><rect x="0.5" y="0.5" width="9" height="8" rx="1"/><rect x="2.6" y="2.4" width="4.8" height="4.2" stroke-width="0.8"/></svg>
<svg style="left:722.2px;top:445.3px" width="10" height="9" viewBox="0 0 10 9" fill="none" stroke="#6a6866" stroke-width="0.9"><rect x="0.5" y="0.5" width="9" height="8" rx="1"/><path d="M3 0.5 V4.6 H7 V0.5"/></svg>
<div style="left:744.2px;top:449.8px;width:4.6px;height:0.9px;background:#777"></div>
<div style="left:753.4px;top:449.8px;width:65.2px;height:0.9px;background:#777"></div>
<div style="left:784.9px;top:446.2px;width:2.8px;height:8px;background:#3b3a39"></div>
<div style="left:822.4px;top:449.8px;width:5.4px;height:0.9px;background:#777"></div>
<div style="left:824.65px;top:447.5px;width:0.9px;height:5.4px;background:#777"></div>

<div id="labels">
<span class="t" id="t_autosave" style="left:15px;top:9.4px;font-size:8.6px;color:#fff;transform:scaleX(0.912)">AutoSave</span>
<span class="t" id="t_off" style="left:66px;top:9.8px;font-size:6.6px;color:#fff;transform:scaleX(0.978)">Off</span>
<span class="t" id="t_fname" style="left:194.4px;top:9.8px;font-size:8.6px;color:#fff;transform:scaleX(0.853)">LTENR_Radio_Measurements_Lo...</span>
<span class="t" id="t_search" style="left:381.7px;top:9.2px;font-size:8.6px;color:#1f5e3c;transform:scaleX(0.856)">Search</span>
<span class="t" id="t_user" style="left:613.6px;top:9.8px;font-size:8.6px;color:#fff;transform:scaleX(0.935)">Nidhi mariswamy</span>
<span class="t" id="t_nm" style="left:683.9px;top:10.15px;font-size:6.7px;color:#fff;transform:scaleX(0.999)">NM</span>
<span class="t" id="r_file" style="left:13.2px;top:30.7px;font-size:9.4px;color:#55534f;transform:scaleX(0.88)">File</span>
<span class="t" id="r_home" style="left:47.8px;top:30.7px;font-size:9.4px;color:#55534f;transform:scaleX(0.935)">Home</span>
<span class="t" id="r_insert" style="left:90px;top:30.7px;font-size:9.4px;color:#55534f;transform:scaleX(0.981)">Insert</span>
<span class="t" id="r_pl" style="left:131.5px;top:30.7px;font-size:9.4px;color:#55534f;transform:scaleX(0.902)">Page Layout</span>
<span class="t" id="r_form" style="left:198px;top:30.7px;font-size:9.4px;color:#55534f;transform:scaleX(0.896)">Formulas</span>
<span class="t" id="r_data" style="left:252px;top:30.7px;font-size:9.4px;color:#55534f;transform:scaleX(0.909)">Data</span>
<span class="t" id="r_rev" style="left:289px;top:30.7px;font-size:9.4px;color:#55534f;transform:scaleX(0.846)">Review</span>
<span class="t" id="r_view" style="left:333px;top:30.7px;font-size:9.4px;color:#55534f;transform:scaleX(0.943)">View</span>
<span class="t" id="r_help" style="left:371px;top:30.7px;font-size:9.4px;color:#55534f;transform:scaleX(0.934)">Help</span>
<span class="t" id="r_td" style="left:408.3px;top:30.7px;font-size:9.4px;color:#2b7d51;transform:scaleX(0.902)">Table Design</span>
<span class="t" id="r_comm" style="left:741.5px;top:30.7px;font-size:9.2px;color:#1e6540;font-weight:bold;transform:scaleX(0.916)">Comments</span>
<span class="t" id="r_share" style="left:813.4px;top:30.7px;font-size:9.2px;color:#1e6540;font-weight:bold;transform:scaleX(0.865)">Share</span>
<span class="t" id="f_s1" style="left:8.4px;top:54.9px;font-size:9.4px;color:#444;transform:scaleX(0.82)">S1</span>
<span class="t" id="f_snr" style="left:175.2px;top:55.9px;font-size:9.2px;color:#444;transform:scaleX(0.892)">SNR(dB)</span>
<span class="t" id="tab1" style="left:60.5px;top:429.1px;font-size:9.6px;color:#1e7145;font-weight:bold;transform:scaleX(0.875)">LTENR_Radio_Measurements_Log</span>
<span class="t" id="tab2" style="left:214.3px;top:429.2px;font-size:9.4px;color:#484644;transform:scaleX(0.925)">Pivot Table(Custom)</span>
<span class="t" id="s_ready" style="left:9.3px;top:447.0px;font-size:7.8px;color:#5a5856;transform:scaleX(0.825)">Ready</span>
<span class="t" id="s_rec" style="left:38.1px;top:447.0px;font-size:7.8px;color:#5a5856;transform:scaleX(0.908)">9840 of 21650 records found</span>
<span class="t" id="s_acc" style="left:153.5px;top:447.0px;font-size:7.8px;color:#5a5856;transform:scaleX(0.875)">Accessibility: Unavailable</span>
<span class="t" id="s_avg" style="left:459.5px;top:447.0px;font-size:7.8px;color:#5a5856;transform:scaleX(0.891)">Average: -12.00049929</span>
<span class="t" id="s_cnt" style="left:541.8px;top:447.0px;font-size:7.8px;color:#5a5856;transform:scaleX(0.883)">Count: 9841</span>
<span class="t" id="s_sum" style="left:590px;top:447.0px;font-size:7.8px;color:#5a5856;transform:scaleX(0.897)">Sum: -118084.913</span>
<span class="t" id="s_zoom" style="left:837px;top:447.0px;font-size:7.8px;color:#5a5856;transform:scaleX(0.837)">100%</span>
</div>
</div>
</body></html>
